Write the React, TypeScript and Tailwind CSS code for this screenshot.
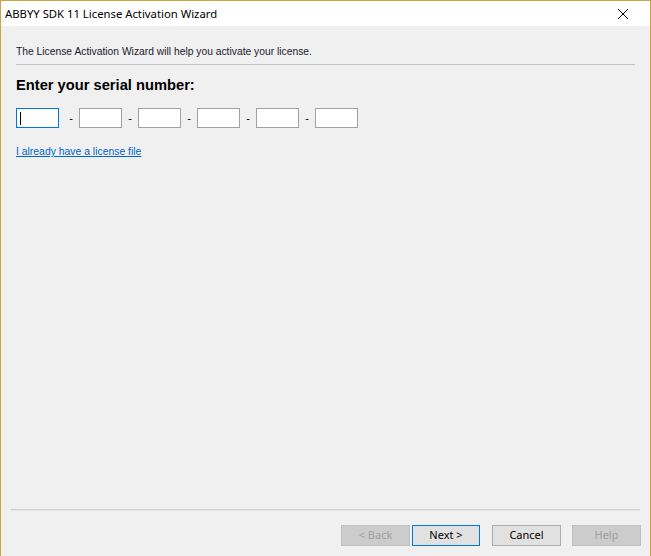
import React from 'react';

const boxes = [0, 1, 2, 3, 4, 5];

const App = () => {
  return (
    <div className="w-[651px] h-[556px] flex flex-col border-t border-l border-r border-[#c9a640] bg-[#f0f0f0] overflow-hidden">
      {/* title bar */}
      <div className="h-[25px] bg-white flex items-center justify-between shrink-0">
        <span className="pl-[4px] text-[11.3px] text-black font-['Noto_Sans',sans-serif] leading-none">
          ABBYY SDK 11 License Activation Wizard
        </span>
        <svg width="12" height="12" viewBox="0 0 12 12" className="mr-[21px]">
          <path d="M1 1 L11 11 M11 1 L1 11" stroke="#000" strokeWidth="1" fill="none" />
        </svg>
      </div>

      {/* body */}
      <div className="flex-1 flex flex-col px-[15px] pt-[19px] font-['Liberation_Sans',sans-serif]">
        <p className="text-[10.3px] leading-[13px] text-[#1a1a2e]">
          The License Activation Wizard will help you activate your license.
        </p>
        <div className="mt-[6px] h-px bg-[#c4c4c4]" />

        <h1 className="mt-[11px] text-[14.7px] leading-[18px] font-bold text-black">Enter your serial number:</h1>

        <div className="mt-[14px] flex items-center">
          {boxes.map((i) => (
            <React.Fragment key={i}>
              {i > 0 && (
                <span className={`text-[11px] text-black text-center ${i === 1 ? 'w-[20px] pl-[4px]' : 'w-[16px]'}`}>-</span>
              )}
              <div
                className={`w-[43px] h-[20px] bg-white border flex items-center ${
                  i === 0 ? 'border-[#0078d7]' : 'border-[#a0a0a0]'
                }`}
              >
                {i === 0 && <div className="ml-[3px] w-px h-[13px] bg-black" />}
              </div>
            </React.Fragment>
          ))}
        </div>

        <a className="mt-[17px] text-[10.4px] leading-[13px] text-[#0066cc] underline self-start cursor-pointer">
          I already have a license file
        </a>

        <div className="flex-1" />
      </div>

      {/* footer */}
      <div className="shrink-0 font-['Noto_Sans',sans-serif]">
        <div className="ml-[10px] w-[629px] h-[2px] border-t border-[#d0d0d0] border-b border-b-[#e6e6e6]" />
        <div className="mt-[14px] mb-[10px] flex justify-end pr-[9px] text-[11px]">
          <button className="w-[69px] h-[21px] bg-[#cccccc] border border-[#bfbfbf] text-[#a0a0a0]">&lt; Back</button>
          <button className="ml-[2px] w-[68px] h-[21px] bg-[#e1e1e1] border border-[#0078d7] text-black">Next &gt;</button>
          <button className="ml-[12px] w-[69px] h-[21px] bg-[#e1e1e1] border border-[#adadad] text-black">Cancel</button>
          <button className="ml-[11px] w-[69px] h-[21px] bg-[#cccccc] border border-[#bfbfbf] text-[#a0a0a0]">Help</button>
        </div>
      </div>
    </div>
  );
};

export default App;
